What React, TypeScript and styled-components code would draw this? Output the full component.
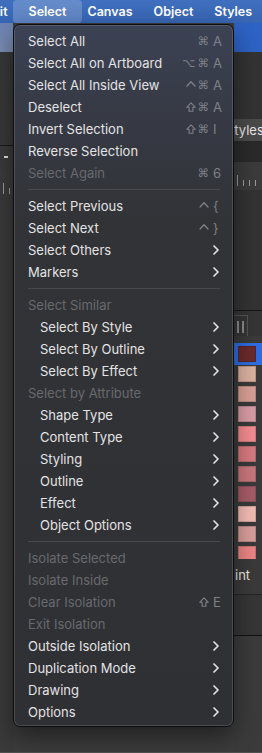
import styled, { createGlobalStyle, css } from 'styled-components';

const GlobalStyle = createGlobalStyle`
  html, body {
    margin: 0;
    padding: 0;
    background: #3c3c3c;
  }
  body {
    font-family: Inter, "Liberation Sans", sans-serif;
    -webkit-font-smoothing: antialiased;
  }
`;

type Mod = 'cmd' | 'opt' | 'ctrl' | 'shift';

type MenuEntry =
  | 'sep'
  | {
      label: string;
      mods?: Mod[];
      keyChar?: string;
      submenu?: boolean;
      disabled?: boolean;
      indent?: boolean;
    };

const MENU: MenuEntry[] = [
  { label: 'Select All', mods: ['cmd'], keyChar: 'A' },
  { label: 'Select All on Artboard', mods: ['opt', 'cmd'], keyChar: 'A' },
  { label: 'Select All Inside View', mods: ['ctrl', 'cmd'], keyChar: 'A' },
  { label: 'Deselect', mods: ['shift', 'cmd'], keyChar: 'A' },
  { label: 'Invert Selection', mods: ['shift', 'cmd'], keyChar: 'I' },
  { label: 'Reverse Selection' },
  { label: 'Select Again', mods: ['cmd'], keyChar: '6', disabled: true },
  'sep',
  { label: 'Select Previous', mods: ['ctrl'], keyChar: '{' },
  { label: 'Select Next', mods: ['ctrl'], keyChar: '}' },
  { label: 'Select Others', submenu: true },
  { label: 'Markers', submenu: true },
  'sep',
  { label: 'Select Similar', disabled: true },
  { label: 'Select By Style', submenu: true, indent: true },
  { label: 'Select By Outline', submenu: true, indent: true },
  { label: 'Select By Effect', submenu: true, indent: true },
  { label: 'Select by Attribute', disabled: true },
  { label: 'Shape Type', submenu: true, indent: true },
  { label: 'Content Type', submenu: true, indent: true },
  { label: 'Styling', submenu: true, indent: true },
  { label: 'Outline', submenu: true, indent: true },
  { label: 'Effect', submenu: true, indent: true },
  { label: 'Object Options', submenu: true, indent: true },
  'sep',
  { label: 'Isolate Selected', disabled: true },
  { label: 'Isolate Inside', disabled: true },
  { label: 'Clear Isolation', mods: ['shift'], keyChar: 'E', disabled: true },
  { label: 'Exit Isolation', disabled: true },
  { label: 'Outside Isolation', submenu: true },
  { label: 'Duplication Mode', submenu: true },
  { label: 'Drawing', submenu: true },
  { label: 'Options', submenu: true },
];

const SWATCHES = [
  '#6a2a2d',
  '#dcb19f',
  '#d9a096',
  '#d99ca6',
  '#f48c90',
  '#d77a80',
  '#c8777c',
  '#a65c67',
  '#f4bcb3',
  '#d99e9a',
  '#ec8585',
];

const StyledScreen = styled.div`
  position: relative;
  width: 262px;
  height: 753px;
  overflow: hidden;
  display: flex;
  flex-direction: column;
  background: #3c3c3c;
`;

const StyledMenuBar = styled.div`
  height: 23px;
  flex: none;
  display: flex;
  align-items: stretch;
  background: linear-gradient(to bottom, #3f6fbe, #3765b3);
  white-space: nowrap;
`;

const StyledMenuTitle = styled.div<{ $active?: boolean; $first?: boolean }>`
  display: flex;
  align-items: center;
  padding: 0 10.5px;
  font-size: 12.5px;
  font-weight: 600;
  color: #ffffff;
  ${({ $first }) => $first && 'margin-left: -26px;'}
  ${({ $active }) =>
    $active &&
    css`
      margin: 0 -5px;
      padding: 0 15.5px;
      border-radius: 4px;
      background: rgba(255, 255, 255, 0.2);
    `}
`;

const StyledWorkspace = styled.div`
  flex: 1;
  display: grid;
  grid-template-columns: 13px 1fr 28px;
  border-bottom: 1px solid #505050;
`;

const StyledDock = styled.div`
  display: flex;
  flex-direction: column;
  overflow: hidden;
  white-space: nowrap;
`;

const StyledBlock = styled.div<{ $h?: number; $bg: string; $line?: string }>`
  flex: ${({ $h }) => ($h ? 'none' : '1')};
  height: ${({ $h }) => ($h ? `${$h}px` : 'auto')};
  background: ${({ $bg }) => $bg};
  border-bottom: ${({ $line }) => ($line ? `1px solid ${$line}` : 'none')};
`;

const StyledRuler = styled.div<{ $h: number }>`
  height: ${({ $h }) => $h}px;
  flex: none;
  display: flex;
  align-items: flex-end;
  gap: 5px;
  padding: 0 3px 4px;
  background: #3b3b3b;
`;

const StyledTick = styled.span<{ $tall?: boolean }>`
  width: 1px;
  height: ${({ $tall }) => ($tall ? 11 : 6)}px;
  background: #9a9a9a;
`;

const StyledDash = styled.div`
  height: 24px;
  flex: none;
  padding: 10px 0 0 4px;
  box-sizing: border-box;
  background: #3a3a3a;
  &::before {
    content: '';
    display: block;
    width: 4px;
    height: 2px;
    background: #e0e0e0;
  }
`;

const StyledTabLabel = styled.div`
  height: 22px;
  flex: none;
  display: flex;
  align-items: center;
  background: #4a4a4a;
  color: #e8e8e8;
  font-size: 13px;
  span {
    margin-left: -8px;
  }
`;

const StyledTabRow = styled.div`
  height: 25px;
  flex: none;
  display: flex;
  align-items: flex-end;
  border-top: 1px solid #161616;
  background: #353535;
`;

const StyledGrip = styled.div`
  width: 14px;
  height: 21px;
  border-right: 1px solid #555;
  border-top: 1px solid #555;
  display: flex;
  gap: 3px;
  padding: 5px 0 0 3px;
  box-sizing: border-box;
  &::before,
  &::after {
    content: '';
    width: 2px;
    height: 12px;
    background: #8a8a8a;
  }
`;

const StyledSwatchList = styled.div`
  height: 223px;
  flex: none;
  display: flex;
  flex-direction: column;
  gap: 4px;
  padding: 10px 0 0;
  box-sizing: border-box;
  background: #3a3a3a;
  overflow: hidden;
`;

const StyledSwatchRow = styled.div<{ $selected?: boolean }>`
  height: 16px;
  flex: none;
  display: flex;
  align-items: center;
  padding-left: 4px;
  box-shadow: ${({ $selected }) => ($selected ? '0 0 0 3px #2f6de0' : 'none')};
  background: ${({ $selected }) => ($selected ? '#2f6de0' : 'transparent')};
`;

const StyledSwatch = styled.div`
  width: 18px;
  height: 16px;
  box-sizing: border-box;
  border: 1px solid rgba(0, 0, 0, 0.15);
`;

const StyledPanelLabel = styled.div`
  height: 36px;
  flex: none;
  display: flex;
  align-items: center;
  padding: 0 0 3px 1px;
  box-sizing: border-box;
  background: #3a3a3a;
  border-bottom: 1px solid #262626;
  color: #e6e6e6;
  font-size: 13px;
`;

const StyledMenu = styled.div`
  position: absolute;
  top: 24px;
  left: 13px;
  width: 221px;
  box-sizing: border-box;
  padding: 5px 0 3px;
  border: 1px solid #0d0d0f;
  border-radius: 7px;
  background: linear-gradient(
    to bottom,
    #3b4254 0%,
    #373b47 11%,
    #323337 28%,
    #2f3034 100%
  );
  box-shadow: inset 0 0 0 1px rgba(255, 255, 255, 0.14), 0 10px 24px rgba(0, 0, 0, 0.45);
`;

const StyledRow = styled.div<{ $indent?: boolean; $disabled?: boolean }>`
  height: 22px;
  display: flex;
  align-items: center;
  padding: 0 12px 0 ${({ $indent }) => ($indent ? 26 : 14)}px;
  font-size: 13px;
  color: ${({ $disabled }) => ($disabled ? '#68696d' : '#e3e3e4')};
  white-space: nowrap;
`;

const StyledLabel = styled.span`
  flex: 1;
`;

const StyledShortcut = styled.span`
  display: flex;
  align-items: center;
  gap: 4px;
  color: #7f8187;
`;

const StyledMods = styled.span`
  display: flex;
  align-items: center;
  gap: 2px;
  font-family: "DejaVu Sans", Inter, sans-serif;
  font-size: 11.5px;
`;

const StyledModIcon = styled.svg`
  width: 10px;
  height: 10px;
  display: block;
`;

const StyledKey = styled.span`
  width: 8px;
  font-size: 13px;
`;

const StyledChevron = styled.svg`
  width: 6px;
  height: 10px;
  margin-right: 2px;
`;

const StyledSeparator = styled.div`
  height: 11px;
  display: flex;
  align-items: center;
  padding: 0 13px 0 14px;
  &::after {
    content: '';
    flex: 1;
    height: 1px;
    background: #48494d;
  }
`;

const ModGlyph = ({ mod }: { mod: Mod }) => {
  if (mod === 'cmd') return <span>⌘</span>;
  if (mod === 'opt') return <span>⌥</span>;
  if (mod === 'shift') {
    return (
      <StyledModIcon viewBox="0 0 10 10">
        <path
          d="M5 0.9 L9.3 5.3 H6.9 V9.2 H3.1 V5.3 H0.7 Z"
          fill="none"
          stroke="currentColor"
          strokeWidth="1.1"
          strokeLinejoin="round"
        />
      </StyledModIcon>
    );
  }
  return (
    <StyledModIcon viewBox="0 0 10 10">
      <polyline
        points="1,6 5,1.8 9,6"
        fill="none"
        stroke="currentColor"
        strokeWidth="1.3"
        strokeLinecap="round"
        strokeLinejoin="round"
      />
    </StyledModIcon>
  );
};

const Chevron = () => (
  <StyledChevron viewBox="0 0 6 10">
    <polyline
      points="1,1 5,5 1,9"
      fill="none"
      stroke="#e2e2e4"
      strokeWidth="1.7"
      strokeLinecap="round"
      strokeLinejoin="round"
    />
  </StyledChevron>
);

const LeftDock = () => (
  <StyledDock>
    <StyledBlock $h={29} $bg="linear-gradient(#6c83b3, #7b8db3)" />
    <StyledBlock $h={93} $bg="#383838" $line="#191919" />
    <StyledDash />
    <StyledRuler $h={24}>
      <StyledTick $tall />
      <StyledTick />
    </StyledRuler>
    <StyledBlock $bg="#3a3a3a" />
  </StyledDock>
);

const RightDock = () => (
  <StyledDock>
    <StyledBlock $h={29} $bg="#2d63c5" />
    <StyledBlock $h={67} $bg="#333333" />
    <StyledTabLabel>
      <span>Styles</span>
    </StyledTabLabel>
    <StyledBlock $h={21} $bg="#2a2a2a" />
    <StyledRuler $h={24}>
      <StyledTick $tall />
      <StyledTick />
      <StyledTick />
      <StyledTick />
    </StyledRuler>
    <StyledBlock $h={120} $bg="#333333" />
    <StyledTabRow>
      <StyledGrip />
    </StyledTabRow>
    <StyledSwatchList>
      {SWATCHES.map((color, i) => (
        <StyledSwatchRow key={color + i} $selected={i === 0}>
          <StyledSwatch style={{ background: color }} />
        </StyledSwatchRow>
      ))}
    </StyledSwatchList>
    <StyledPanelLabel>int</StyledPanelLabel>
    <StyledBlock $h={40} $bg="#363636" $line="#111111" />
    <StyledBlock $bg="#3b3b3b" />
  </StyledDock>
);

const SelectMenu = () => (
  <StyledMenu>
    {MENU.map((entry, i) => {
      if (entry === 'sep') return <StyledSeparator key={`sep-${i}`} />;
      return (
        <StyledRow key={entry.label + i} $indent={entry.indent} $disabled={entry.disabled}>
          <StyledLabel>{entry.label}</StyledLabel>
          {entry.keyChar && (
            <StyledShortcut>
              <StyledMods>
                {entry.mods?.map((m, j) => (
                  <ModGlyph key={j} mod={m} />
                ))}
              </StyledMods>
              <StyledKey>{entry.keyChar}</StyledKey>
            </StyledShortcut>
          )}
          {entry.submenu && <Chevron />}
        </StyledRow>
      );
    })}
  </StyledMenu>
);

const App = () => {
  return (
    <>
      <GlobalStyle />
      <StyledScreen>
        <StyledMenuBar>
          <StyledMenuTitle $first>Edit</StyledMenuTitle>
          <StyledMenuTitle $active>Select</StyledMenuTitle>
          <StyledMenuTitle>Canvas</StyledMenuTitle>
          <StyledMenuTitle>Object</StyledMenuTitle>
          <StyledMenuTitle>Styles</StyledMenuTitle>
        </StyledMenuBar>
        <StyledWorkspace>
          <LeftDock />
          <div />
          <RightDock />
        </StyledWorkspace>
        <SelectMenu />
      </StyledScreen>
    </>
  );
};

export default App;
